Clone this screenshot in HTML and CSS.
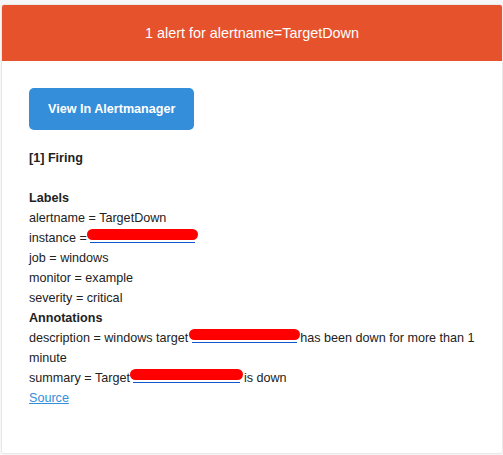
FILE: index.html
```html
<!DOCTYPE html>
<html>
<head>
<meta charset="utf-8">
<link rel="stylesheet" href="styles.css">
</head>
<body>
<div class="card">
  <div class="alert-header">1 alert for alertname=TargetDown</div>
  <div class="content">
    <div class="btn-row"><a class="btn-primary" href="#">View In Alertmanager</a></div>
    <div class="details">
      <strong>[1] Firing</strong><br>
      <br>
      <strong>Labels</strong><br>
      alertname = TargetDown<br>
      instance = <a class="redact" href="#"></a><br>
      job = windows<br>
      monitor = example<br>
      severity = critical<br>
      <strong>Annotations</strong><br>
      description = windows target <a class="redact" href="#"></a> has been down for more than 1 minute<br>
      summary = Target <a class="redact wide" href="#"></a> is down<br>
      <a class="source" href="#">Source</a><br>
    </div>
  </div>
</div>
</body>
</html>
```

FILE: styles.css
```css
html, body {
  margin: 0;
  padding: 0;
  background: #f6f6f6;
  font-family: "Liberation Sans", Arial, sans-serif;
  font-size: 12.6px;
  color: #222;
}
.card {
  margin: 4px 0 0 1px;
  width: 500px;
  height: 448px;
  background: #fff;
  border: 1px solid #e9e9e9;
  border-radius: 3px;
  overflow: hidden;
}
.alert-header {
  background: #e6522c;
  color: #fff;
  font-size: 14.4px;
  line-height: 20px;
  padding: 18px 20px;
  text-align: center;
}
.content {
  padding: 27px 27px 40px 27px;
}
.btn-row {
  margin-bottom: 18px;
}
.btn-primary {
  display: inline-block;
  background: #348eda;
  color: #fff;
  font-weight: bold;
  text-decoration: none;
  line-height: 22px;
  padding: 10px 19px;
  border-radius: 5px;
}
.details {
  line-height: 20px;
}
.details strong {
  color: #222;
}
.redact {
  display: inline-block;
  position: relative;
  width: 105px;
  height: 12px;
  border-bottom: 1px solid #1155cc;
  vertical-align: -1px;
}
.redact.wide {
  width: 107px;
}
.redact::before {
  content: "";
  position: absolute;
  left: -3px;
  right: -3px;
  top: -1px;
  height: 11px;
  background: #ff0000;
  border-radius: 6px;
}
.source {
  color: #348eda;
  text-decoration: underline;
}
```
